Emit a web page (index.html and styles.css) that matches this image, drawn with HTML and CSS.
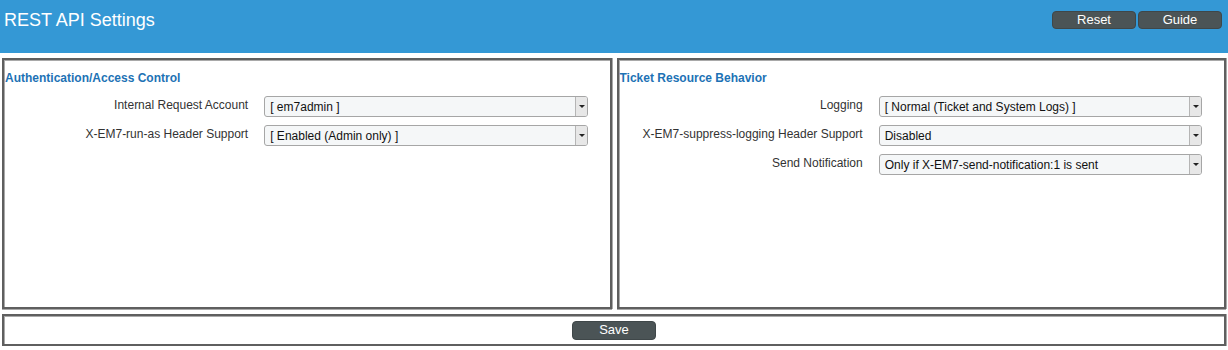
FILE: index.html
```html
<!DOCTYPE html>
<html>
<head>
<meta charset="utf-8">
<link rel="stylesheet" href="styles.css">
</head>
<body>
<header class="topbar">
  <h1 class="title">REST API Settings</h1>
  <div class="top-actions">
    <button class="btn">Reset</button>
    <button class="btn">Guide</button>
  </div>
</header>
<main class="panels">
  <section class="panel">
    <h2 class="panel-title">Authentication/Access Control</h2>
    <div class="form">
      <label class="lbl">Internal Request Account</label>
      <div class="select"><span class="val">[ em7admin ]</span><span class="arrow"></span></div>
      <label class="lbl">X-EM7-run-as Header Support</label>
      <div class="select"><span class="val">[ Enabled (Admin only) ]</span><span class="arrow"></span></div>
    </div>
  </section>
  <section class="panel">
    <h2 class="panel-title">Ticket Resource Behavior</h2>
    <div class="form">
      <label class="lbl">Logging</label>
      <div class="select"><span class="val">[ Normal (Ticket and System Logs) ]</span><span class="arrow"></span></div>
      <label class="lbl">X-EM7-suppress-logging Header Support</label>
      <div class="select"><span class="val">Disabled</span><span class="arrow"></span></div>
      <label class="lbl">Send Notification</label>
      <div class="select"><span class="val">Only if X-EM7-send-notification:1 is sent</span><span class="arrow"></span></div>
    </div>
  </section>
</main>
<footer class="footer">
  <button class="btn save">Save</button>
</footer>
</body>
</html>
```
FILE: styles.css
```css
* { box-sizing: border-box; }
body {
  margin: 0;
  background: #fff;
  font-family: "Liberation Sans", Arial, sans-serif;
  font-size: 12px;
  color: #333;
}
.topbar {
  background: #3498d5;
  height: 53px;
  display: flex;
  justify-content: space-between;
  align-items: flex-start;
  padding: 0 6px 0 4px;
}
.title {
  margin: 0;
  font-weight: normal;
  font-size: 18px;
  color: #fff;
  line-height: 20px;
  padding-top: 10px;
}
.top-actions {
  display: flex;
  gap: 2px;
  padding-top: 11px;
}
.btn {
  font-family: "Liberation Sans", Arial, sans-serif;
  font-size: 13px;
  color: #fff;
  background: #4b5456;
  border: 1px solid #3f4749;
  border-radius: 4px;
  width: 84px;
  height: 18px;
  padding: 0;
  line-height: 16px;
}
.panels {
  display: grid;
  grid-template-columns: 1fr 1fr;
  gap: 5px;
  padding: 5px 2px 0 2px;
}
.panel, .footer {
  border: 2px solid #5f5f5f;
  box-shadow: inset 1px 1px 0 #a9a9a9, 0 1px 0 #a9a9a9, 1px 0 0 #a9a9a9;
  height: 251px;
  padding: 11px 1px 0 1px;
}
.panel-title {
  margin: 0 0 11px 0;
  font-size: 12px;
  font-weight: bold;
  color: #1d72b5;
  line-height: 14px;
}
.form {
  display: grid;
  grid-template-columns: 40.3% 53.6%;
  column-gap: 16px;
  row-gap: 8px;
  align-items: start;
}
.lbl {
  text-align: right;
  color: #333;
  line-height: 14px;
  padding-top: 2px;
}
.select {
  display: flex;
  height: 21px;
  border: 1px solid #a6a6a6;
  border-radius: 3px;
  background: #f5f7f8;
  color: #111;
  overflow: hidden;
}
.val {
  flex: 1;
  padding: 3px 0 0 5px;
  line-height: 14px;
  white-space: nowrap;
}
.arrow {
  width: 12px;
  border-left: 1px solid #b5b5b5;
  background: #e7e7e7;
  position: relative;
}
.arrow::after {
  content: "";
  position: absolute;
  left: 3px;
  top: 8px;
  border-left: 3px solid transparent;
  border-right: 3px solid transparent;
  border-top: 3px solid #222;
}
.footer {
  margin: 5px 2px 0 2px;
  height: 32px;
  padding: 0;
  display: flex;
  justify-content: center;
  align-items: center;
}
.save {
  width: 84px;
  height: 19px;
}
```
